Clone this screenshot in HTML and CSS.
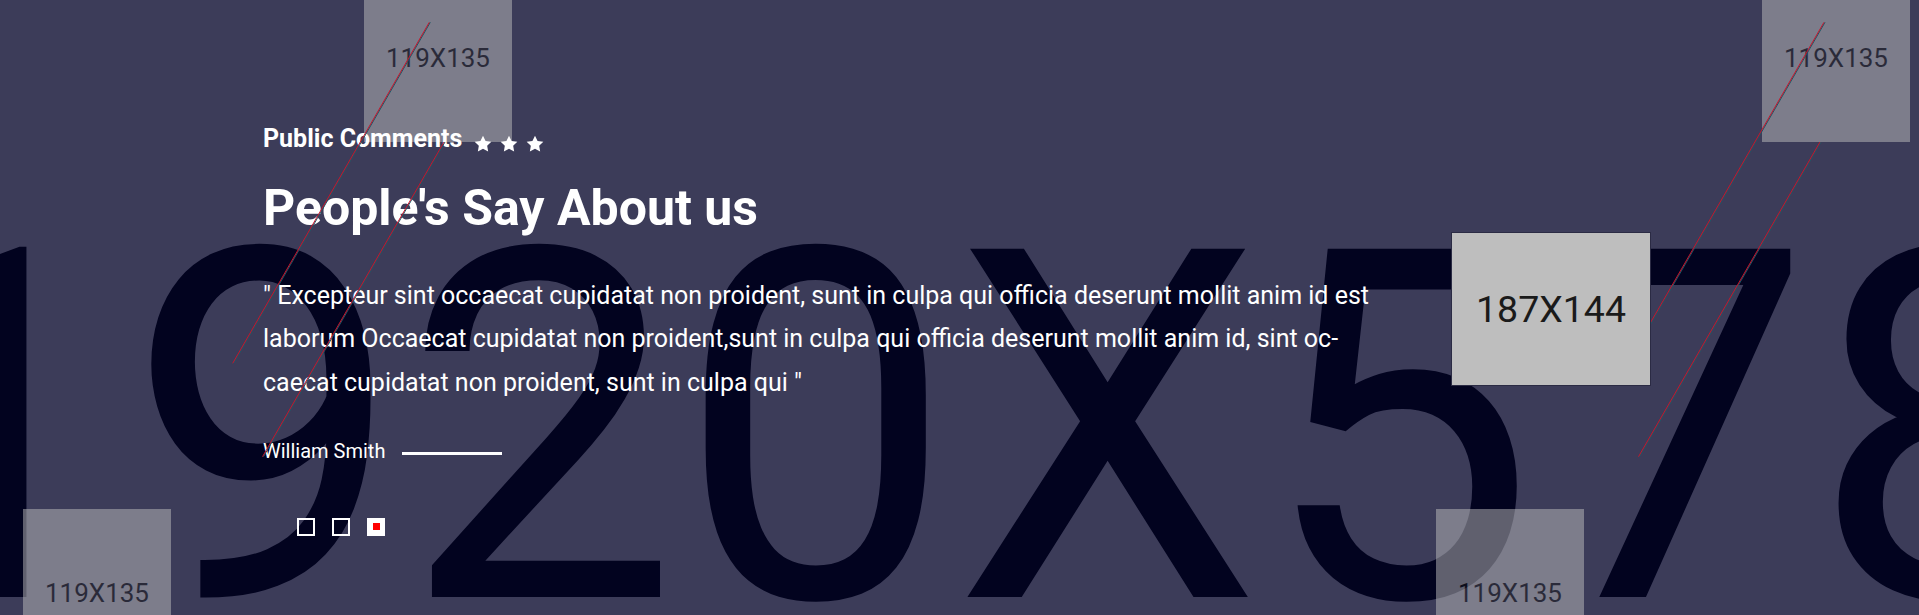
FILE: index.html
```html
<!DOCTYPE html>
<html lang="en">
<head>
<meta charset="utf-8">
<title>People's Say About us</title>
<link rel="stylesheet" href="styles.css">
</head>
<body>
<div class="stage">
  <div class="bg-label" aria-hidden="true">1920X578</div>

  <div class="ph ph-sm ph-tl">119X135</div>
  <div class="ph ph-sm ph-tr">119X135</div>
  <div class="ph ph-sm ph-bl">119X135</div>
  <div class="ph ph-sm ph-br">119X135</div>

  <section class="testimonial">
    <div class="eyebrow">
      <h3 class="eyebrow-title">Public Comments</h3>
      <div class="stars">
        <svg viewBox="0 0 24 24"><polygon points="12,2 15.09,8.26 22,9.27 17,14.14 18.18,21.02 12,17.77 5.82,21.02 7,14.14 2,9.27 8.91,8.26"/></svg>
        <svg viewBox="0 0 24 24"><polygon points="12,2 15.09,8.26 22,9.27 17,14.14 18.18,21.02 12,17.77 5.82,21.02 7,14.14 2,9.27 8.91,8.26"/></svg>
        <svg viewBox="0 0 24 24"><polygon points="12,2 15.09,8.26 22,9.27 17,14.14 18.18,21.02 12,17.77 5.82,21.02 7,14.14 2,9.27 8.91,8.26"/></svg>
      </div>
    </div>
    <h2 class="title">People's Say About us</h2>
    <p class="quote">" Excepteur sint occaecat cupidatat non proident, sunt in culpa qui officia deserunt mollit anim id est laborum Occaecat cupidatat non proident,sunt in culpa qui officia deserunt mollit anim id, sint oc-<br>caecat cupidatat non proident, sunt in culpa qui "</p>
    <div class="author">
      <span class="author-name">William Smith</span>
      <span class="author-rule"></span>
    </div>
    <div class="dots">
      <span class="dot"></span>
      <span class="dot"></span>
      <span class="dot is-active"></span>
    </div>
  </section>

  <svg class="rays" viewBox="0 0 1919 615" width="1919" height="615">
    <g class="ray-shade">
      <line x1="430.3" y1="22.3" x2="233.7" y2="363.3"/>
      <line x1="445" y1="142" x2="263.5" y2="456.7"/>
      <line x1="1825" y1="22.3" x2="1628" y2="363.3"/>
      <line x1="1821" y1="142" x2="1639.5" y2="456.7"/>
    </g>
    <g class="ray-red">
      <line x1="429.3" y1="22.3" x2="232.7" y2="363.3"/>
      <line x1="444" y1="142" x2="262.5" y2="456.7"/>
      <line x1="1824" y1="22.3" x2="1627" y2="363.3"/>
      <line x1="1820" y1="142" x2="1638.5" y2="456.7"/>
    </g>
  </svg>

  <div class="ph ph-lg">187X144</div>
</div>
</body>
</html>
```

FILE: styles.css
```css
html, body {
  margin: 0;
  padding: 0;
  background: #3c3c59;
}

.stage {
  position: relative;
  width: 1919px;
  height: 615px;
  overflow: hidden;
  background: #3c3c59;
  font-family: Roboto, "Liberation Sans", Arial, sans-serif;
}

/* background placeholder label */
.bg-label {
  position: absolute;
  left: -148px;
  top: 185px;
  font-family: Roboto, "Liberation Sans", sans-serif;
  font-weight: 400;
  font-size: 490px;
  line-height: 1;
  color: #02031f;
  white-space: nowrap;
}

/* placeholder boxes */
.ph {
  position: absolute;
  display: flex;
  align-items: center;
  justify-content: center;
  background: #bdbdbd;
  color: #1a1a1a;
  font-family: Roboto, "Liberation Sans", sans-serif;
  box-sizing: border-box;
}

.ph-sm {
  width: 148px;
  height: 168px;
  font-size: 26px;
  opacity: 0.5;
}

.ph-tl { left: 364px; top: -26px; }
.ph-tr { left: 1762px; top: -26px; }
.ph-bl { left: 23px; top: 509px; }
.ph-br { left: 1436px; top: 509px; }

.ph-lg {
  left: 1451px;
  top: 232px;
  width: 200px;
  height: 154px;
  font-size: 37.5px;
  border: 1px solid #2b2b44;
  background: #bebebe;
}

/* testimonial content */
.testimonial {
  position: relative;
  padding: 124.5px 0 0 263px;
  color: #ffffff;
}

.eyebrow {
  display: flex;
  align-items: flex-start;
  gap: 11px;
  height: 28px;
}

.eyebrow-title {
  margin: 0;
  font-weight: 700;
  font-size: 25px;
  line-height: 28px;
}

.stars {
  display: flex;
  gap: 6px;
  margin-top: 9px;
}

.stars svg {
  width: 20px;
  height: 20px;
  fill: #ffffff;
  display: block;
}

.title {
  margin: 27.5px 0 0;
  font-weight: 700;
  font-size: 50px;
  line-height: 56px;
}

.quote {
  margin: 37.5px 0 0;
  max-width: 1140px;
  font-weight: 400;
  font-size: 25px;
  line-height: 43.5px;
}

.author {
  display: flex;
  align-items: flex-start;
  gap: 17px;
  margin-top: 35px;
  height: 24px;
}

.author-name {
  font-size: 20px;
  line-height: 24px;
  font-weight: 400;
}

.author-rule {
  width: 100px;
  height: 3px;
  margin-top: 13px;
  background: #ffffff;
}

.dots {
  display: flex;
  gap: 17px;
  margin: 54.5px 0 0 34px;
}

.dot {
  width: 18px;
  height: 18px;
  box-sizing: border-box;
  border: 2px solid #ffffff;
}

.dot.is-active {
  display: flex;
  align-items: center;
  justify-content: center;
  background: #ffffff;
}

.dot.is-active::after {
  content: "";
  width: 7px;
  height: 7px;
  background: #ff0000;
}

/* decorative diagonal rays */
.rays {
  position: absolute;
  left: 0;
  top: 0;
  pointer-events: none;
}

.ray-shade line {
  stroke: #1d5866;
  stroke-width: 1;
}

.ray-red line {
  stroke: #c8142c;
  stroke-width: 1;
}
```
